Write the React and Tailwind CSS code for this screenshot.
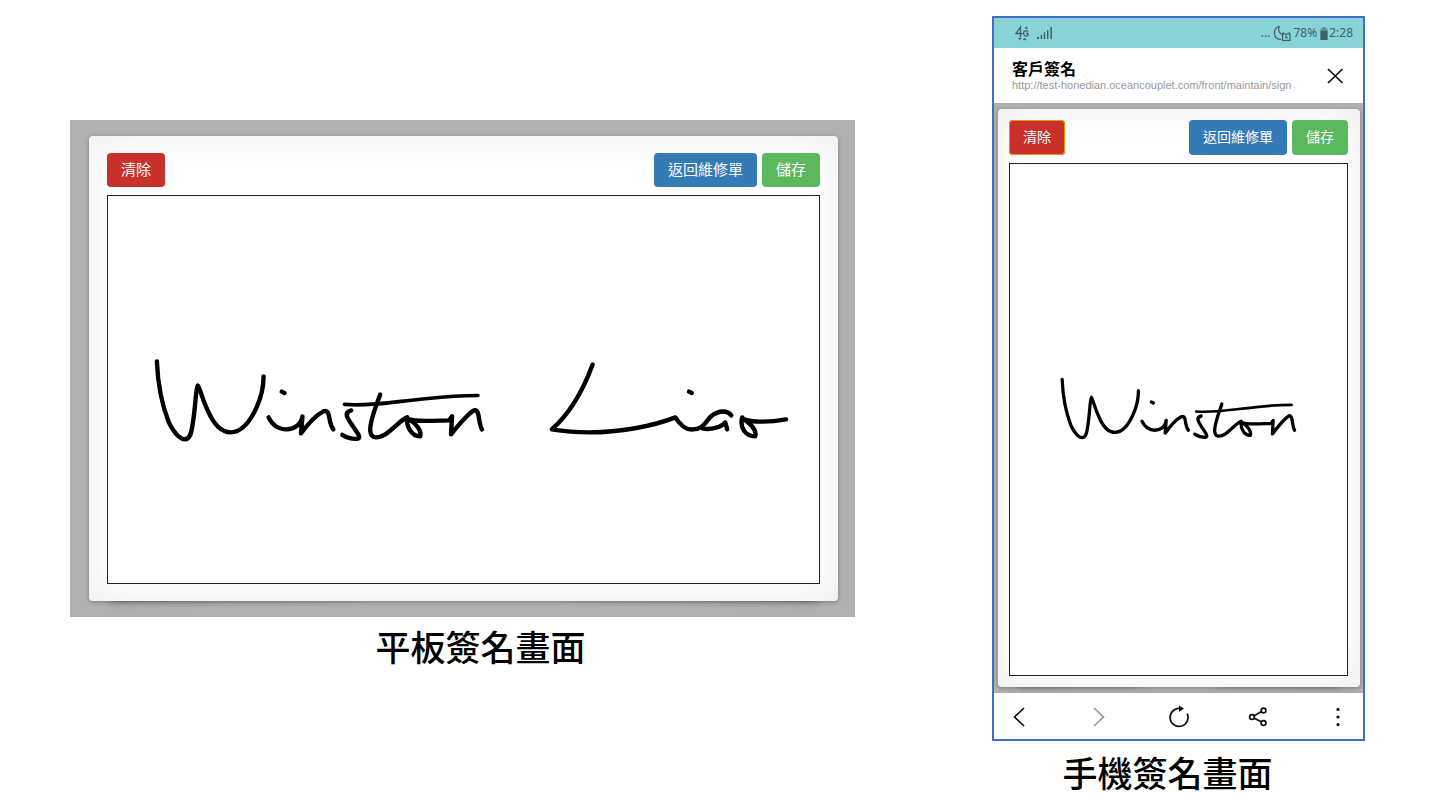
import React from 'react';
import clsx from 'clsx';

const WINSTON = [
  'M16 21 C17 45 22 67 28 82 C32 91 39 99 44 99 C50 99 51 90 52 83 C55 65 55 47 57 45 C60 50 62 60 67 70 C73 84 81 92 90 92 C102 92 111 78 116 67 C121 56 123 46 123 36',
  'M128 77 C132 85 138 89 146 89 C154 89 161 84 162 76 L160.5 93 C168 83 177 74 183 71 C191 68 187 82 193 89',
  'M141.2 51.2 L144 52.6',
  'M211 70 C203 72 207 78 212 85 C216 91 222 98 217 98.5 C211 99 206 97 202 94.5',
  'M240 54 C236 65 229 82 230 91 C231 99 238 98 245 94 C254 88 260 80 267 77 C266 86 271 96 280 96 C282 91 276 83 269 79 C276 82 300 80 309 80 L312 76 L311 94 C319 84 327 74 334 70 C340 68 338 82 342 89',
];

const LIAO = [
  'M453 24 C446 43 434 70 412 89 C424 91 437 92 450 92 C480 92 513 86 536 77 C541 85 547 90 554 89 C562 89 565 84 569 79 C575 71 587 68 592 75',
  'M563 88 C571 90 582 87 586 82 L588 89',
  'M549.6 51.2 L552.4 52.6',
  'M603 77 C600 88 607 96 616 96 C618 90 612 84 605 79 C612 82 630 82 647 79',
];

const buttonColors = {
  red: 'bg-[#c9302c]',
  blue: 'bg-[#337ab7]',
  green: 'bg-[#5cb85c]',
};

const PadButton = ({ color, compact, focused, children }) => (
  <button
    type="button"
    className={clsx(
      'flex items-center rounded px-3.5 pb-0.5 text-white',
      buttonColors[color],
      compact ? 'h-[35px] text-[14px]' : 'h-[34px] text-[15px]',
      focused && 'outline-1 -outline-offset-1 outline-[#e59700]'
    )}
  >
    {children}
  </button>
);

const Stroke = ({ paths, width }) =>
  paths.map((d) => <path key={d} d={d} strokeWidth={width} />);

const SignCard = ({ compact, children }) => (
  <div className={clsx('relative z-0 bg-[#b0b0b0]', compact ? 'pt-1.5 pr-[3px] pb-1.5 pl-1' : 'pt-4 pr-[17px] pb-4 pl-[19px]')}>
    <div className="relative">
      {/* lifted corner shadows */}
      <div className="absolute bottom-3 left-5 -z-10 h-4 w-1/3 -rotate-1 shadow-[0_10px_8px_rgba(0,0,0,0.4)]" />
      <div className="absolute right-5 bottom-3 -z-10 h-4 w-1/3 rotate-1 shadow-[0_10px_8px_rgba(0,0,0,0.4)]" />
      <div
        className={clsx(
          'rounded bg-white shadow-[0_1px_4px_rgba(0,0,0,0.3),inset_0_0_40px_rgba(0,0,0,0.08)]',
          compact ? 'py-[11px] pr-3 pl-[11px]' : 'px-[18px] py-[17px]'
        )}
      >
        <div className="mb-2 flex items-center justify-between">
          <PadButton color="red" compact={compact} focused={compact}>清除</PadButton>
          <div className="flex gap-[5px]">
            <PadButton color="blue" compact={compact}>返回維修單</PadButton>
            <PadButton color="green" compact={compact}>儲存</PadButton>
          </div>
        </div>
        {children}
      </div>
    </div>
  </div>
);

const TabletScreen = () => (
  <SignCard>
    <svg
      viewBox="0 0 713 388"
      role="img"
      aria-label="Winston Liao"
      className="block w-full border border-[#222] bg-white"
      fill="none"
      stroke="#000"
      strokeLinecap="round"
      strokeLinejoin="round"
    >
      <g transform="translate(33 145)">
        <Stroke paths={WINSTON} width={4.4} />
        <path d="M204 64 C232 66 255 61 288 58 C306 56 322 55 338 55" strokeWidth="3.6" />
        <Stroke paths={LIAO} width={4.4} />
      </g>
    </svg>
  </SignCard>
);

const StatusBar = () => (
  <div className="flex h-[30px] items-center justify-between bg-[#88d3d6] pr-2.5 pl-[21px] text-[12px] text-[#3f6067]">
    <div className="flex items-center gap-1.5">
      <svg width="16" height="18" viewBox="0 0 16 18" fill="none" stroke="currentColor" strokeWidth="1.3">
        <path d="M5.5 13 V3 L1 9.5 H7.5" />
        <path d="M13 7.5 C11.5 6 8.5 6.5 8.5 9.3 C8.5 12.5 11.5 12.5 13 11.2 V9.3 H11" />
        <path d="M10 4.5 L11.3 2.6 L12.6 4.5 Z M3.4 14 h3 l-1.5 1.8 Z M8.2 15.8 h3 l-1.5 -1.8 Z" fill="currentColor" strokeWidth="0.5" />
      </svg>
      <svg width="16" height="14" viewBox="0 0 16 14" fill="currentColor">
        <path d="M0 11h2v2H0z M3.7 9h1.4v4H3.7z M6.8 6.5h1.4V13H6.8z M10 4h1.4v9H10z M13.4 1h1.5v12h-1.5z" />
      </svg>
    </div>
    <div className="flex items-center">
      <span>...</span>
      <svg className="ml-[3px]" width="19" height="17" viewBox="0 0 19 17" fill="none" stroke="currentColor" strokeWidth="1.2">
        <path d="M6.5 1 C-1 4 0 14.5 8 14.5 M6.5 1 C4.5 5 6 9 10 9.5" />
        <rect x="9.5" y="9" width="7.5" height="6.5" />
        <path d="M9.5 7.8 h1.5 M15.5 7.8 h1.5 M13 10.3 v2.4 h1.8" />
      </svg>
      <span className="ml-px">78%</span>
      <svg className="ml-[3px]" width="8" height="13" viewBox="0 0 8 13" fill="currentColor">
        <path d="M2.5 0h3v1.5h2V13h-7V1.5h2z" opacity=".6" />
        <path d="M.5 4h7v9h-7z" />
      </svg>
      <span className="ml-px">2:28</span>
    </div>
  </div>
);

const AddressBar = () => (
  <header className="flex h-[55px] items-center justify-between bg-white pr-4 pl-[18px]">
    <div className="pb-0.5">
      <h2 className="text-[16px] leading-[20px] font-bold">客戶簽名</h2>
      <p className="font-['Liberation_Sans','Arial',sans-serif] text-[11px] leading-[12px] text-[#999]">
        http://test-honedian.oceancouplet.com/front/maintain/sign
      </p>
    </div>
    <button type="button" aria-label="關閉" className="p-0.5">
      <svg width="20" height="20" viewBox="0 0 20 20" fill="none" stroke="#111" strokeWidth="1.7">
        <path d="M3 3 L17.5 17 M17.5 3 L3 17" />
      </svg>
    </button>
  </header>
);

const navItems = [
  { label: '上一頁', icon: <path d="M17 3 L7.5 12 L17 21" /> },
  { label: '下一頁', icon: <path d="M7 3 L16.5 12 L7 21" stroke="#999" /> },
  {
    label: '重新整理',
    icon: (
      <>
        <path d="M12 3.4 A9 9 0 1 0 20.2 8.5" />
        <path d="M12 0.5 L17 3.6 L12 7 Z" fill="#111" stroke="none" />
      </>
    ),
  },
  {
    label: '分享',
    icon: (
      <>
        <circle cx="6" cy="12" r="2.4" />
        <circle cx="17.5" cy="5.5" r="2.4" />
        <circle cx="17.5" cy="18" r="2.4" />
        <path d="M8.3 10.7 L15.2 6.8 M8.3 13.3 L15.2 16.8" />
      </>
    ),
  },
  {
    label: '更多',
    icon: <path d="M12 4.4h.01 M12 12h.01 M12 19.6h.01" strokeWidth="3.2" strokeLinecap="round" />,
  },
];

const PhoneScreen = () => (
  <div className="border-2 border-[#416ec2]">
    <StatusBar />
    <AddressBar />
    <SignCard compact>
      <svg
        viewBox="0 0 339 514"
        role="img"
        aria-label="Winston"
        className="block w-full border border-[#222] bg-white"
        fill="none"
        stroke="#000"
        strokeLinecap="round"
        strokeLinejoin="round"
      >
        <g transform="translate(41 201) scale(0.717 0.75)">
          <Stroke paths={WINSTON} width={4.6} />
          <path d="M204 64 C232 66 255 61 288 58 C306 56 322 55 338 55" strokeWidth="3.6" />
        </g>
      </svg>
    </SignCard>
    <nav className="flex h-[46px] items-center justify-between bg-white px-[13px] pt-0.5">
      {navItems.map((item) => (
        <button key={item.label} type="button" aria-label={item.label}>
          <svg width="24" height="24" viewBox="0 0 24 24" fill="none" stroke="#111" strokeWidth="1.7">
            {item.icon}
          </svg>
        </button>
      ))}
    </nav>
  </div>
);

const App = () => (
  <main className="grid grid-cols-[1fr_373px] items-start gap-[137px] bg-white pt-4 pr-[75px] pl-[70px] font-['Noto_Sans','Noto_Sans_CJK_TC',sans-serif] text-black">
    <figure className="pt-[104px]">
      <TabletScreen />
      <figcaption className="mt-1.5 pl-9 text-center text-[35px] leading-[50px] font-medium">平板簽名畫面</figcaption>
    </figure>
    <figure>
      <PhoneScreen />
      <figcaption className="mt-2 pr-[22px] text-center text-[35px] leading-[50px] font-medium">手機簽名畫面</figcaption>
    </figure>
  </main>
);

export default App;
